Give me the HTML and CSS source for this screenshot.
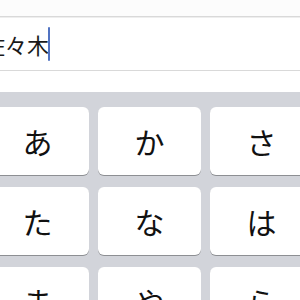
FILE: index.html
```html
<!DOCTYPE html>
<html lang="ja">
<head>
<meta charset="utf-8">
<link rel="stylesheet" href="styles.css">
</head>
<body>
<div class="screen">
  <div class="top"></div>
  <div class="field">
    <span class="text">佐々木</span><span class="caret"></span>
  </div>
  <div class="below"></div>
  <div class="keyboard">
    <div class="key">あ</div>
    <div class="key">か</div>
    <div class="key">さ</div>
    <div class="key">た</div>
    <div class="key">な</div>
    <div class="key">は</div>
    <div class="key">ま</div>
    <div class="key">や</div>
    <div class="key">ら</div>
  </div>
</div>
</body>
</html>
```
FILE: styles.css
```css
html, body {
  margin: 0;
  padding: 0;
  background: #ffffff;
}
.screen {
  width: 300px;
  height: 300px;
  overflow: hidden;
  font-family: "Noto Sans CJK JP", "Noto Sans", sans-serif;
}
.top {
  height: 16px;
  background: #fcfcfc;
}
.field {
  height: 53px;
  border-top: 1px solid #d9d9d9;
  border-bottom: 1px solid #d9d9d9;
  box-shadow: inset 0 1px 0 #eeeeee;
  display: flex;
  align-items: center;
  background: #ffffff;
}
.text {
  margin-left: -17px;
  font-size: 22px;
  line-height: 22px;
  color: #1a1a1a;
}
.caret {
  width: 2px;
  height: 34px;
  margin-left: -1px;
  background: #5173c2;
  border-radius: 1px;
}
.below {
  height: 21px;
  background: #ffffff;
}
.keyboard {
  background: #d2d4da;
  padding-top: 15px;
  margin-left: -14px;
  width: 330px;
  display: grid;
  grid-template-columns: 103px 103px 103px;
  grid-auto-rows: 68px;
  column-gap: 9px;
  row-gap: 12px;
  height: 300px;
}
.key {
  background: #ffffff;
  border-radius: 6px;
  box-shadow: 0 1px 0 #8d8f93;
  display: flex;
  align-items: center;
  justify-content: center;
  font-size: 30px;
  color: #111111;
}
```
